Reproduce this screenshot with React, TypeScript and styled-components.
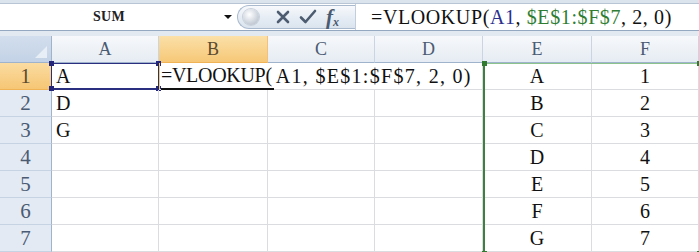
import React from 'react';
import styled, { createGlobalStyle, css } from 'styled-components';

const Global = createGlobalStyle`
  html, body { margin: 0; padding: 0; background: #ffffff; }
  body { width: 699px; height: 252px; overflow: hidden; }
`;

const SERIF = `"Liberation Serif", "DejaVu Serif", serif`;

const Frame = styled.div`
  width: 699px;
  height: 252px;
  overflow: hidden;
  background: #dbe3ed;
  display: flex;
  flex-direction: column;
`;

const FormulaBar = styled.div`
  margin-top: 3px;
  height: 28px;
  display: flex;
  border-top: 1px solid #b8c5d5;
  border-bottom: 1px solid #94a8c2;
  background: #ffffff;
`;

const NameBox = styled.div`
  width: 237px;
  display: flex;
  align-items: center;
  background: #ffffff;
`;

const NameText = styled.span`
  flex: 1;
  text-align: center;
  font-family: ${SERIF};
  font-size: 14px;
  font-weight: bold;
  letter-spacing: 0.3px;
  color: #222;
`;

const DropArrow = styled.span`
  width: 19px;
  display: flex;
  justify-content: center;
  align-items: center;
  &::before {
    content: '';
    border-left: 4px solid transparent;
    border-right: 4px solid transparent;
    border-top: 4px solid #111;
  }
`;

const FuncPill = styled.div`
  width: 112px;
  display: flex;
  align-items: center;
  margin: 1px 0;
  border: 1px solid #a9bacf;
  border-right: none;
  border-radius: 14px 0 0 14px;
  background: linear-gradient(#f7f9fc, #e4ebf3 60%, #dbe4ee);
  padding-left: 5px;
`;

const Knob = styled.span`
  width: 16px;
  height: 16px;
  border-radius: 50%;
  background: radial-gradient(circle at 40% 35%, #ffffff 0%, #d9dee5 45%, #aab3bf 100%);
  box-shadow: 0 0 0 1px #c8d0da;
  margin-right: 11px;
`;

const IconSlot = styled.span`
  width: 25px;
  display: flex;
  justify-content: center;
  align-items: center;
`;

const Fx = styled.span`
  font-family: "Liberation Serif", serif;
  font-style: italic;
  font-weight: bold;
  font-size: 21px;
  color: #4a5a70;
  line-height: 1;
  sub {
    font-size: 12px;
    vertical-align: -2px;
  }
`;

const FormulaInput = styled.div`
  flex: 1;
  display: flex;
  align-items: center;
  border-left: 1px solid #c3cedc;
  padding-left: 15px;
  font-family: ${SERIF};
  font-size: 20px;
  letter-spacing: 0.6px;
  color: #111;
  white-space: pre;
`;

const Ref = styled.span<{ $tone: 'blue' | 'green' }>`
  color: ${(p) => (p.$tone === 'blue' ? '#2b2f8f' : '#2f7d32')};
`;

const Gap = styled.div`
  height: 5px;
  background: #e3e9f1;
`;

const SheetGrid = styled.div`
  position: relative;
  display: grid;
  grid-template-columns: 52px 107px 109px 107px 108px 109px 107px;
  grid-auto-rows: 27px;
  background: #ffffff;
`;

const ColHead = styled.div<{ $active?: boolean }>`
  display: flex;
  align-items: center;
  justify-content: center;
  font-family: ${SERIF};
  font-size: 18px;
  color: #4b5b72;
  border-right: 1px solid #c9d5e3;
  border-bottom: 1px solid #9fb4cc;
  background: linear-gradient(#f6f8fb, #e6ecf3);
  ${(p) =>
    p.$active &&
    css`
      background: linear-gradient(#fbe0a8, #f6c878);
      border-bottom-color: #f0b457;
      border-right-color: #f2c27c;
      color: #5b4a30;
    `}
`;

const Corner = styled.div`
  position: relative;
  background: linear-gradient(#d2deed, #c3d2e6);
  border-right: 1px solid #9fb4cc;
  border-bottom: 1px solid #9fb4cc;
  &::after {
    content: '';
    position: absolute;
    right: 4px;
    bottom: 4px;
    border-left: 12px solid transparent;
    border-bottom: 12px solid #e8eef6;
  }
`;

const RowHead = styled.div<{ $active?: boolean }>`
  display: flex;
  align-items: center;
  justify-content: center;
  font-family: ${SERIF};
  font-size: 21px;
  color: #4b5b72;
  background: #e3eaf4;
  border-right: 1px solid #9fb4cc;
  border-bottom: 1px solid #c5d3e3;
  ${(p) =>
    p.$active &&
    css`
      background: linear-gradient(#fbdca2, #f6c674);
      border-bottom-color: #f0b457;
      color: #5b4a30;
    `}
`;

const Cell = styled.div<{ $align?: 'left' | 'center' }>`
  position: relative;
  display: flex;
  align-items: center;
  justify-content: ${(p) => (p.$align === 'center' ? 'center' : 'flex-start')};
  padding-left: ${(p) => (p.$align === 'center' ? '0' : '4px')};
  font-family: ${SERIF};
  font-size: 20px;
  color: #111;
  border-right: 1px solid #dadcdf;
  border-bottom: 1px solid #dadcdf;
  white-space: pre;
`;

const EditCell = styled(Cell)`
  grid-column: span 3;
  padding-left: 2px;
  box-shadow: inset 1px 0 0 #f0cf5a;
  align-items: stretch;
`;

const FuncName = styled.span`
  display: flex;
  align-items: center;
  letter-spacing: -0.3px;
  border-bottom: 2px solid #111;
  margin-bottom: -1px;
  padding-right: 2px;
`;

const ArgText = styled.span`
  display: flex;
  align-items: center;
  letter-spacing: 1.3px;
  padding-left: 2px;
`;

const RefBox = styled.div`
  position: absolute;
  inset: 0 -1px -1px -1px;
  border: 1px solid #2b2f7f;
  border-bottom-width: 2px;
  pointer-events: none;
`;

const Handle = styled.span<{ $color: string; $v: 'top' | 'bottom'; $h: 'left' | 'right' }>`
  position: absolute;
  width: 5px;
  height: 5px;
  background: ${(p) => p.$color};
  ${(p) => (p.$v === 'top' ? 'top: -3px;' : 'bottom: -3px;')}
  ${(p) => (p.$h === 'left' ? 'left: -3px;' : 'right: -3px;')}
`;

const RangeBox = styled.div`
  position: absolute;
  left: 483px;
  top: 27px;
  width: 214px;
  height: 189px;
  border: 1px solid #8cc28c;
  border-left: 2px solid #3f7f3f;
  pointer-events: none;
`;

const XIcon = () => (
  <svg width="14" height="14" viewBox="0 0 14 14">
    <path d="M2 2 L12 12 M12 2 L2 12" stroke="#4d5c70" strokeWidth="2.6" strokeLinecap="round" />
  </svg>
);

const CheckIcon = () => (
  <svg width="18" height="16" viewBox="0 0 18 16">
    <path d="M2 8.5 L6.5 13 L16 2" stroke="#4d5c70" strokeWidth="2.6" fill="none" strokeLinecap="round" strokeLinejoin="round" />
  </svg>
);

const corners: Array<['top' | 'bottom', 'left' | 'right']> = [
  ['top', 'left'],
  ['top', 'right'],
  ['bottom', 'left'],
  ['bottom', 'right'],
];

const cols = ['A', 'B', 'C', 'D', 'E', 'F'];
const colA = ['A', 'D', 'G', '', '', '', ''];
const colE = ['A', 'B', 'C', 'D', 'E', 'F', 'G'];

export default function App() {
  return (
    <Frame>
      <Global />
      <FormulaBar>
        <NameBox>
          <NameText>SUM</NameText>
          <DropArrow />
        </NameBox>
        <FuncPill>
          <Knob />
          <IconSlot>
            <XIcon />
          </IconSlot>
          <IconSlot>
            <CheckIcon />
          </IconSlot>
          <IconSlot>
            <Fx>
              f<sub>x</sub>
            </Fx>
          </IconSlot>
        </FuncPill>
        <FormulaInput>
          =VLOOKUP(<Ref $tone="blue">A1</Ref>, <Ref $tone="green">$E$1:$F$7</Ref>, 2, 0)
        </FormulaInput>
      </FormulaBar>
      <Gap />
      <SheetGrid>
        <Corner />
        {cols.map((c) => (
          <ColHead key={c} $active={c === 'B'}>
            {c}
          </ColHead>
        ))}
        {colA.map((a, i) => (
          <React.Fragment key={i}>
            <RowHead $active={i === 0}>{i + 1}</RowHead>
            <Cell>
              {a}
              {i === 0 && (
                <RefBox>
                  {corners.map(([v, h]) => (
                    <Handle key={v + h} $color="#23267a" $v={v} $h={h} />
                  ))}
                </RefBox>
              )}
            </Cell>
            {i === 0 ? (
              <EditCell>
                <FuncName>=VLOOKUP(</FuncName>
                <ArgText>A1, $E$1:$F$7, 2, 0)</ArgText>
              </EditCell>
            ) : (
              <>
                <Cell />
                <Cell />
                <Cell />
              </>
            )}
            <Cell $align="center">{colE[i]}</Cell>
            <Cell $align="center">{i + 1}</Cell>
          </React.Fragment>
        ))}
        <RangeBox>
          {corners.map(([v, h]) => (
            <Handle key={v + h} $color="#2f7a2f" $v={v} $h={h} />
          ))}
        </RangeBox>
      </SheetGrid>
    </Frame>
  );
}
